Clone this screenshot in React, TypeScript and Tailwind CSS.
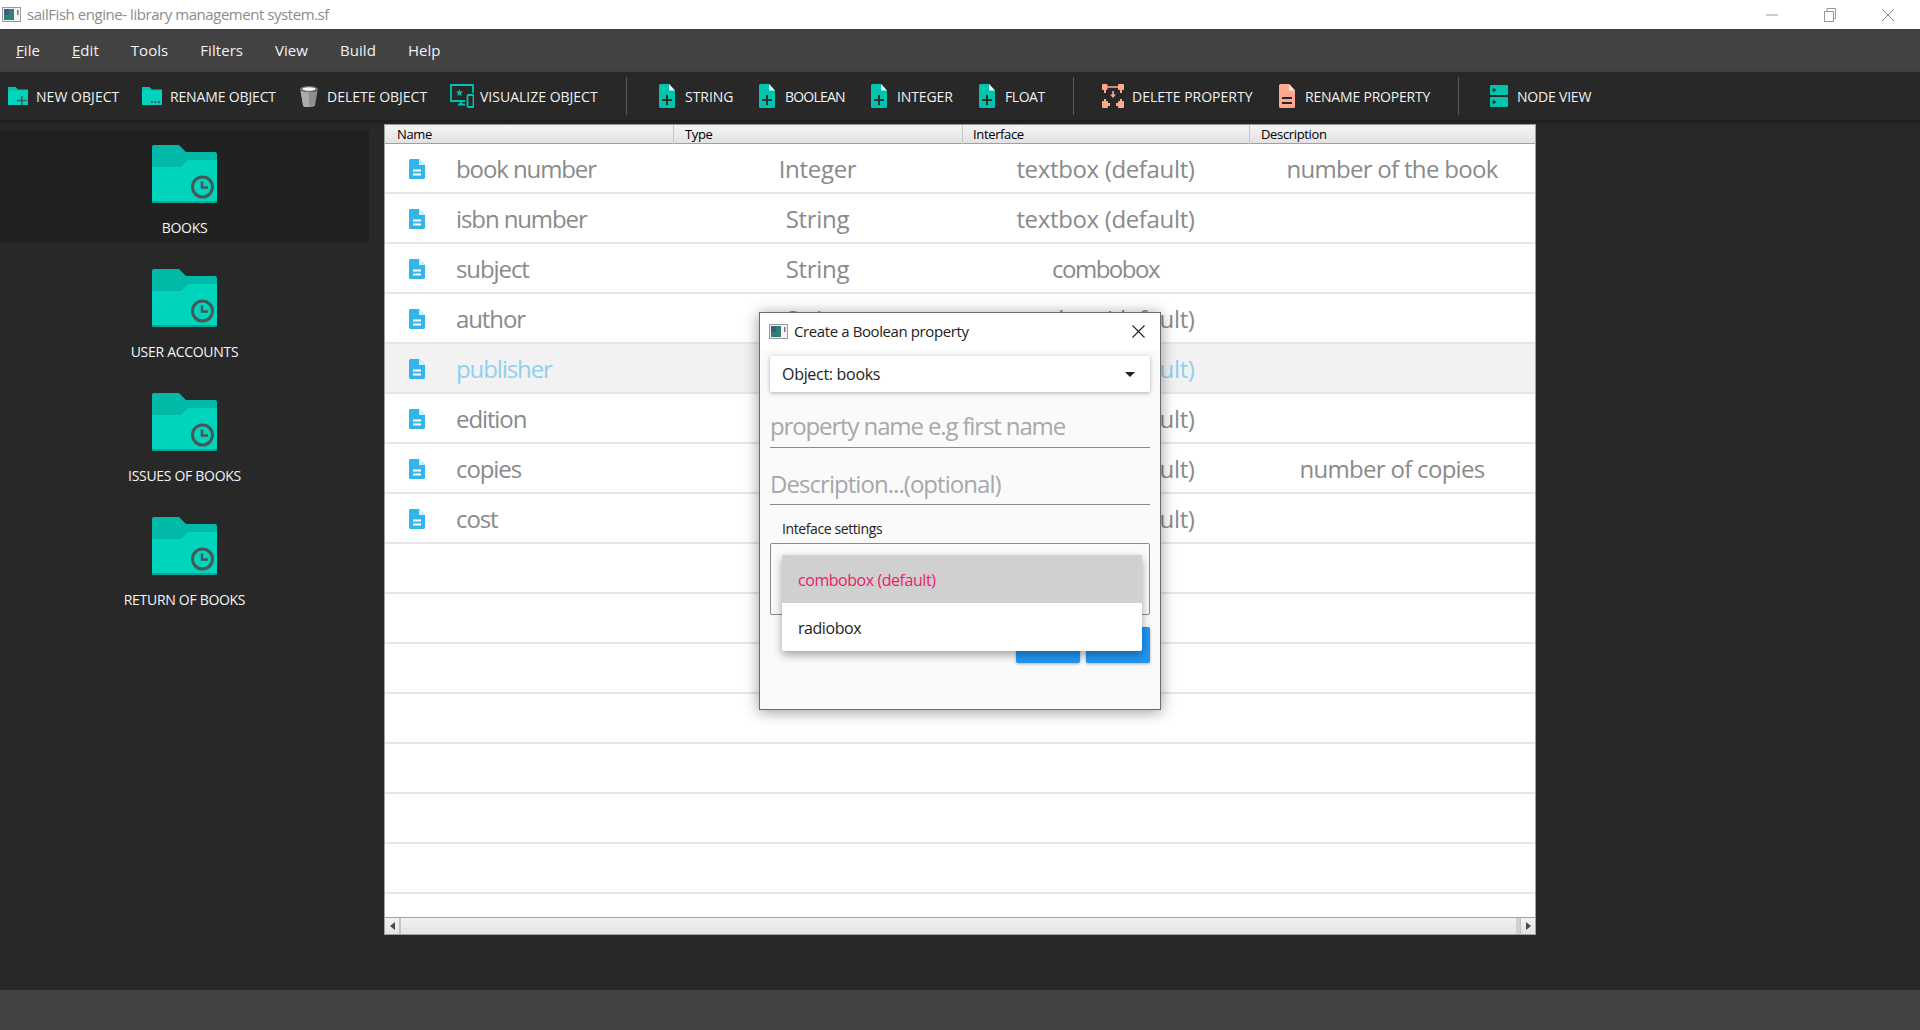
import React from 'react';

const rows = [
  { name: 'book number', type: 'Integer', ui: 'textbox (default)', desc: 'number of the book' },
  { name: 'isbn number', type: 'String', ui: 'textbox (default)', desc: '' },
  { name: 'subject', type: 'String', ui: 'combobox', desc: '' },
  { name: 'author', type: 'String', ui: 'textbox (default)', desc: '' },
  { name: 'publisher', type: 'String', ui: 'textbox (default)', desc: '', active: true },
  { name: 'edition', type: 'String', ui: 'textbox (default)', desc: '' },
  { name: 'copies', type: 'Integer', ui: 'textbox (default)', desc: 'number of copies' },
  { name: 'cost', type: 'Float', ui: 'textbox (default)', desc: '' }
];

const emptyRows = [1, 2, 3, 4, 5, 6, 7];

const menus = ['File', 'Edit', 'Tools', 'Filters', 'View', 'Build', 'Help'];

const objects = ['BOOKS', 'USER ACCOUNTS', 'ISSUES OF BOOKS', 'RETURN OF BOOKS'];

const AppIcon = () => (
  <svg width="19" height="15" viewBox="0 0 19 15">
    <rect x="0.5" y="0.5" width="18" height="14" fill="#f4f4f4" stroke="#999" />
    <rect x="2" y="2" width="10" height="11" fill="#2f7f7a" />
    <rect x="2" y="2" width="5" height="6" fill="#3d5f74" />
    <rect x="15" y="3" width="1.5" height="5" fill="#777" />
  </svg>
);

const BigFolder = () => (
  <svg width="65" height="58" viewBox="0 0 65 58">
    <path d="M2 0H27L34 7H63a2 2 0 0 1 2 2V30H0V2a2 2 0 0 1 2-2z" fill="#00b9a7" />
    <path d="M0 22H29L36 15H65V56a2 2 0 0 1-2 2H2a2 2 0 0 1-2-2z" fill="#00d4bc" />
    <path d="M0 56H65a2 2 0 0 1-2 2H2a2 2 0 0 1-2-2z" fill="#00a896" />
    <circle cx="50.5" cy="42" r="10" fill="none" stroke="#4b5456" strokeWidth="3" />
    <path d="M50 36.5V42.5H56" fill="none" stroke="#4b5456" strokeWidth="2.5" />
  </svg>
);

const SmallFolder = ({ dots }: { dots?: boolean }) => (
  <svg width="20" height="18" viewBox="0 0 20 18">
    <path d="M0 0H7.5L10 2.5H20V18H0z" fill="#00c4ae" />
    <path d="M0 3.5H20V18H0z" fill="#00d4bc" />
    {dots ? (
      <path d="M9 14h2v2H9zM12.5 14h2v2h-2zM16 14h2v2h-2z" fill="#4f5a5a" />
    ) : (
      <path d="M13 9h1.6v3.7H19v1.6h-4.4V18H13v-3.7H9v-1.6h4z" fill="#4f5a5a" />
    )}
  </svg>
);

const Trash = () => (
  <svg width="18" height="21" viewBox="0 0 18 21">
    <ellipse cx="9" cy="3" rx="9" ry="3" fill="#777" />
    <ellipse cx="9" cy="3" rx="6.5" ry="1.7" fill="#f5f5f5" />
    <path d="M0.5 4.5C3 6.5 15 6.5 17.5 4.5L15 19.5C14 21.5 4 21.5 3 19.5z" fill="#8f8f8f" />
    <path d="M9 6.2V21H5C4 21 3.2 20.4 3 19.5L0.5 4.5C2 5.6 5 6.2 9 6.2z" fill="#ababab" />
  </svg>
);

const Visualize = () => (
  <svg width="24" height="24" viewBox="0 0 24 24" fill="none" stroke="#00c4ae" strokeWidth="1.8">
    <path d="M15 17H1V1H23V9" />
    <path d="M8 20.5H15M11 17V20.5" />
    <rect x="17.5" y="11" width="6" height="12" rx="1" />
    <path d="M9.5 5l1 2.4 2.5.2-1.9 1.6.6 2.5-2.2-1.3-2.2 1.3.6-2.5L6 7.6l2.5-.2z" fill="#00c4ae" stroke="none" />
  </svg>
);

const AddFile = () => (
  <svg width="16" height="24" viewBox="0 0 16 24">
    <path d="M1.5 0H10L16 6.5V22.5A1.5 1.5 0 0 1 14.5 24H1.5A1.5 1.5 0 0 1 0 22.5V1.5A1.5 1.5 0 0 1 1.5 0z" fill="#00c4ae" />
    <path d="M10 0L16 6.5H10z" fill="#e8fffb" />
    <path d="M7 11H9V15H13V17H9V21H7V17H3V15H7z" fill="#25302f" />
  </svg>
);

const Nodes = () => (
  <svg width="22" height="24" viewBox="0 0 22 24" fill="#ffa88f">
    <rect x="0" y="0" width="5.5" height="6" rx="1" />
    <rect x="16" y="0" width="6" height="6" rx="1" />
    <path d="M5 2.2H17V3.8H5zM2 6H4V9H2zM18 6H20V9H18z" />
    <path d="M10.2 7H11.8V10.5H14L11 14L8 10.5H10.2z" />
    <rect x="0" y="17" width="6" height="7" rx="1" />
    <rect x="16" y="17" width="6" height="7" rx="1" />
    <path d="M2 15H4V18H2zM18 15H20V18H18zM6 19H8V22H6zM14 19H16V22H14z" />
  </svg>
);

const RenameFile = () => (
  <svg width="16" height="24" viewBox="0 0 16 24">
    <path d="M1.5 0H10L16 6.5V22.5A1.5 1.5 0 0 1 14.5 24H1.5A1.5 1.5 0 0 1 0 22.5V1.5A1.5 1.5 0 0 1 1.5 0z" fill="#ffa88f" />
    <path d="M10 0L16 6.5H10z" fill="#ffe6de" />
    <path d="M3 13H13V15H3zM3 18H13V20H3z" fill="#25282a" />
  </svg>
);

const NodeView = () => (
  <svg width="18" height="22" viewBox="0 0 18 22">
    <rect x="0" y="0" width="18" height="10" rx="1" fill="#00c4ae" />
    <rect x="0" y="12" width="18" height="10" rx="1" fill="#00c4ae" />
    <circle cx="4" cy="5" r="1.7" fill="#1f3331" />
    <circle cx="4" cy="17" r="1.7" fill="#1f3331" />
  </svg>
);

const RowFile = () => (
  <svg width="16" height="20" viewBox="0 0 16 20">
    <path d="M1.5 0H10L16 6V18.5A1.5 1.5 0 0 1 14.5 20H1.5A1.5 1.5 0 0 1 0 18.5V1.5A1.5 1.5 0 0 1 1.5 0z" fill="#33b5ec" />
    <path d="M10 0L16 6H10z" fill="#d6f1fd" />
    <path d="M4 10.5H12V12.5H4zM4 14.5H12V16.5H4z" fill="#fff" />
  </svg>
);

const Separator = () => <div className="w-px h-[38px] bg-[#5a5a5a]" />;

const Tool = ({ icon, label, className, track }: { icon: React.ReactNode; label: string; className: string; track: string }) => (
  <div className={`flex items-center shrink-0 ${className}`}>
    {icon}
    <span className={`text-[14px] text-[#f0f0f0] whitespace-nowrap ${track}`}>{label}</span>
  </div>
);

const App = () => {
  return (
    <div className="relative w-[1920px] h-[1030px] overflow-hidden flex flex-col bg-[#282828] font-['Open_Sans',sans-serif]">
      {/* Title bar */}
      <div className="h-[29px] bg-white flex items-center pl-[2px] shrink-0">
        <AppIcon />
        <span className="ml-[6px] text-[15px] tracking-[-0.45px] text-[#8c8c8c]">sailFish engine- library management system.sf</span>
        <div className="ml-auto flex items-center pr-[26px] gap-[46px]">
          <svg width="12" height="12" viewBox="0 0 12 12"><path d="M0 6H12" stroke="#999" /></svg>
          <svg width="12" height="14" viewBox="0 0 12 14" fill="none" stroke="#999"><rect x="0.5" y="3.5" width="9" height="10" /><path d="M3 3.5V0.5H11.5V10.5H9.5" /></svg>
          <svg width="12" height="12" viewBox="0 0 12 12"><path d="M0 0L12 12M12 0L0 12" stroke="#888" /></svg>
        </div>
      </div>

      {/* Menu bar */}
      <div className="h-[43px] bg-[#424242] flex items-center pl-[16px] gap-[32px] shrink-0 text-[15px] tracking-[0.05px] text-[#f2f2f2]">
        {menus.map((menu) => (
          <span key={menu}>
            {menu === 'File' || menu === 'Edit' ? (
              <>
                <span className="underline">{menu[0]}</span>
                {menu.slice(1)}
              </>
            ) : (
              menu
            )}
          </span>
        ))}
      </div>

      {/* Toolbar */}
      <div className="h-[48px] bg-[#282828] flex items-center shrink-0 pl-[8px] shadow-[0_2px_4px_rgba(0,0,0,0.35)] z-10">
        <Tool className="gap-[8px] w-[134px]" track="tracking-[0.05px]" icon={<SmallFolder />} label="NEW OBJECT" />
        <Tool className="gap-[8px] w-[158px]" track="tracking-[-0.15px]" icon={<SmallFolder dots />} label="RENAME OBJECT" />
        <Tool className="gap-[9px] w-[150px]" track="tracking-[0px]" icon={<Trash />} label="DELETE OBJECT" />
        <Tool className="gap-[6px] w-[176px]" track="tracking-[0px]" icon={<Visualize />} label="VISUALIZE OBJECT" />
        <Separator />
        <Tool className="gap-[10px] w-[100px] ml-[32px]" track="tracking-[-0.05px]" icon={<AddFile />} label="STRING" />
        <Tool className="gap-[10px] w-[112px]" track="tracking-[-0.8px]" icon={<AddFile />} label="BOOLEAN" />
        <Tool className="gap-[10px] w-[108px]" track="tracking-[-0.1px]" icon={<AddFile />} label="INTEGER" />
        <Tool className="gap-[10px] w-[94px]" track="tracking-[-0.45px]" icon={<AddFile />} label="FLOAT" />
        <Separator />
        <Tool className="gap-[8px] w-[177px] ml-[28px]" track="tracking-[0px]" icon={<Nodes />} label="DELETE PROPERTY" />
        <Tool className="gap-[10px] w-[179px]" track="tracking-[-0.2px]" icon={<RenameFile />} label="RENAME PROPERTY" />
        <Separator />
        <Tool className="gap-[9px] ml-[31px]" track="tracking-[-0.2px]" icon={<NodeView />} label="NODE VIEW" />
      </div>

      {/* Main area */}
      <div className="flex-1 flex min-h-0">
        <div className="w-[369px] shrink-0 pt-[10px] flex flex-col gap-[12px]">
          {objects.map((item, index) => (
            <div
              key={item}
              className={`h-[112px] flex flex-col items-center pt-[15px] ${index === 0 ? 'bg-[#212121]' : ''}`}
            >
              <BigFolder />
              <span className="mt-[15px] text-[14px] leading-[20px] tracking-[-0.3px] text-[#f5f5f5]">{item}</span>
            </div>
          ))}
        </div>

        <div className="ml-[15px] mt-[4px] w-[1152px] h-[811px] flex flex-col border border-[#a0a0a0] bg-white">
          <div className="h-[19px] shrink-0 grid grid-cols-[288px_289px_287px_1fr] border-b border-[#a0a0a0] bg-gradient-to-b from-[#f5f5f5] to-[#e2e2e2] text-[13px] leading-[19px] tracking-[-0.35px] text-black">
            <div className="pl-[12px]">Name</div>
            <div className="pl-[11px] border-l border-[#c8c8c8]">Type</div>
            <div className="pl-[10px] border-l border-[#c8c8c8]">Interface</div>
            <div className="pl-[11px] border-l border-[#c8c8c8]">Description</div>
          </div>

          <div className="flex-1 min-h-0 overflow-hidden">
            {rows.map((row) => (
              <div
                key={row.name}
                className={`h-[50px] grid grid-cols-[288px_289px_287px_1fr] items-center border-b-2 border-[#e6e6e6] pt-[1px] text-[24px] ${
                  row.active ? 'bg-[#f2f2f2] text-[#8fd0ef]' : 'text-[#8a8a8a]'
                }`}
              >
                <div className="flex items-center pl-[24px] gap-[31px] tracking-[-1.1px]">
                  <RowFile />
                  <span>{row.name}</span>
                </div>
                <div className="text-center tracking-[-0.3px]">{row.type}</div>
                <div className={`text-center ${row.ui === 'combobox' ? 'tracking-[-1.5px]' : 'tracking-[-0.35px]'}`}>{row.ui}</div>
                <div className="text-center tracking-[-0.7px]">{row.desc}</div>
              </div>
            ))}
            {emptyRows.map((n) => (
              <div key={n} className="h-[50px] border-b-2 border-[#e6e6e6]" />
            ))}
          </div>

          <div className="h-[17px] shrink-0 flex border-t border-[#a0a0a0] bg-gradient-to-b from-[#f2f2f2] to-[#e4e4e4]">
            <div className="w-[16px] flex items-center justify-center border-r-2 border-[#c4c4c4]">
              <div className="w-0 h-0 border-y-[4px] border-y-transparent border-r-[5px] border-r-[#4a4a4a]" />
            </div>
            <div className="flex-1" />
            <div className="w-[4px] bg-[#d0d0d0]" />
            <div className="w-[15px] flex items-center justify-center border-l border-[#c4c4c4]">
              <div className="w-0 h-0 border-y-[4px] border-y-transparent border-l-[5px] border-l-[#4a4a4a]" />
            </div>
          </div>
        </div>
      </div>

      {/* Status bar */}
      <div className="h-[40px] bg-[#424242] shrink-0" />

      {/* Dialog */}
      <div className="absolute left-[759px] top-[312px] z-20 w-[402px] h-[398px] flex flex-col bg-[#fafafa] border border-[#6b6b6b] shadow-[0_2px_14px_rgba(0,0,0,0.4)]">
        <div className="h-[37px] shrink-0 bg-white flex items-center pl-[9px] pr-[15px]">
          <AppIcon />
          <span className="ml-[6px] text-[15px] tracking-[-0.4px] text-[#222]">Create a Boolean property</span>
          <svg className="ml-auto" width="13" height="13" viewBox="0 0 13 13"><path d="M0.5 0.5L12.5 12.5M12.5 0.5L0.5 12.5" stroke="#222" strokeWidth="1.1" /></svg>
        </div>
        <div className="flex-1 px-[10px] pt-[6px]">
          <div className="h-[36px] flex items-center justify-between pl-[12px] pr-[15px] bg-white rounded-[2px] shadow-[0_1px_4px_rgba(0,0,0,0.3)] text-[16px] tracking-[-0.3px] text-[#222]">
            <span>Object: books</span>
            <div className="w-0 h-0 border-x-[5px] border-x-transparent border-t-[5px] border-t-[#222]" />
          </div>
          <div className="mt-[17px] h-[39px] border-b border-[#8a8a8a] text-[24px] leading-[34px] tracking-[-1.13px] text-[#a8a8a8]">property name e.g first name</div>
          <div className="mt-[19px] h-[38px] border-b border-[#8a8a8a] text-[24px] leading-[34px] tracking-[-0.95px] text-[#a8a8a8]">Description...(optional)</div>
          <div className="mt-[14px] pl-[12px] text-[14px] leading-[20px] tracking-[-0.4px] text-[#222]">Inteface settings</div>
          <div className="relative mt-[4px] h-[72px] border border-[#8a8a8a] rounded-[2px]">
            <div className="absolute left-[11px] top-[11px] w-[360px] rounded-[2px] bg-white shadow-[0_4px_10px_rgba(0,0,0,0.35)] z-10 text-[16px] tracking-[-0.45px]">
              <div className="h-[48px] flex items-center pl-[16px] pt-[1px] bg-[#d0d0d0] text-[#e91e63]">combobox (default)</div>
              <div className="h-[48px] flex items-center pl-[16px] pt-[1px] text-[#222]">radiobox</div>
            </div>
          </div>
          <div className="mt-[12px] flex justify-end gap-[6px]">
            <div className="w-[64px] h-[36px] rounded-[2px] bg-[#2196f3] shadow-[0_1px_3px_rgba(0,0,0,0.3)]" />
            <div className="w-[64px] h-[36px] rounded-[2px] bg-[#2196f3] shadow-[0_1px_3px_rgba(0,0,0,0.3)]" />
          </div>
        </div>
      </div>
    </div>
  );
};

export default App;
